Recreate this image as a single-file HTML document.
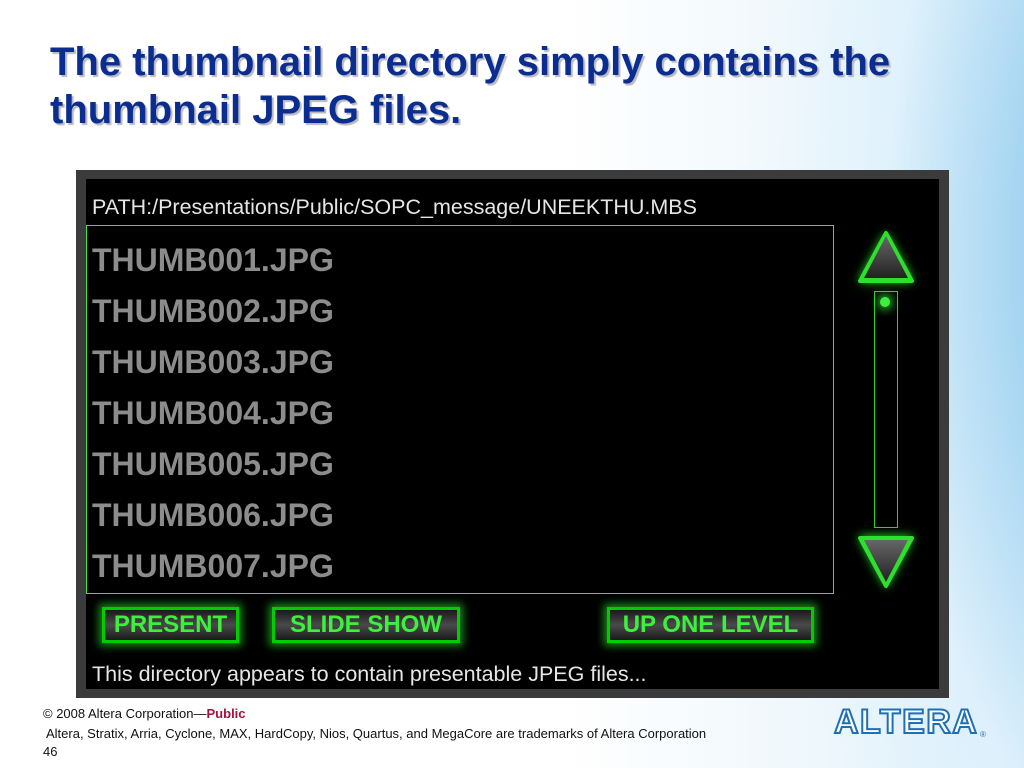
<!DOCTYPE html>
<html><head><meta charset="utf-8"><style>
body{margin:0;width:1024px;height:768px;overflow:hidden;position:relative;font-family:"Liberation Sans",sans-serif;
background:
radial-gradient(ellipse 420px 900px at 1180px 250px,#5fb4e6 0%,#9fd2f0 35%,rgba(220,240,252,0.6) 70%,rgba(255,255,255,0) 100%),
linear-gradient(90deg,#ffffff 0%,#ffffff 55%,#eef7fc 80%,#dceffa 100%);}
.t{position:absolute;left:50px;top:38px;font-size:40px;font-weight:bold;color:#0b2d8f;line-height:48px;text-shadow:2px 2px 1px #b8b8c0;white-space:nowrap;}
.frame{position:absolute;left:76px;top:170px;width:853px;height:510px;border:10px solid #3b3b3b;border-top-width:9px;border-bottom-width:9px;background:#000;}
.path{position:absolute;left:6px;top:16px;color:#e6e6e6;font-size:21.5px;white-space:nowrap;}
.list{position:absolute;left:0px;top:46px;width:746px;height:367px;border:1px solid #3ee03e;}
.f{position:absolute;left:5px;color:#8c8c8c;font-weight:bold;font-size:32px;}
.btn{position:absolute;top:607px;height:36px;background:linear-gradient(#1a1a1a,#4a4a4a 50%,#1a1a1a);border:3px solid #0c0;box-shadow:0 0 8px 3px #1c8a1c;color:#3ef03e;font-weight:bold;font-size:24px;line-height:30px;text-align:center;box-sizing:border-box;white-space:nowrap;}
.msg{position:absolute;left:6px;top:483px;color:#e6e6e6;font-size:21.5px;white-space:nowrap;}
.foot{position:absolute;left:43px;font-size:13px;color:#111;white-space:nowrap;}
</style></head><body>
<div class="t">The thumbnail directory simply contains the<br>thumbnail JPEG files.</div>
<div class="frame">
<div class="path">PATH:/Presentations/Public/SOPC_message/UNEEKTHU.MBS</div>
<div class="list">
<div class="f" style="top:16px">THUMB001.JPG</div>
<div class="f" style="top:67px">THUMB002.JPG</div>
<div class="f" style="top:118px">THUMB003.JPG</div>
<div class="f" style="top:169px">THUMB004.JPG</div>
<div class="f" style="top:220px">THUMB005.JPG</div>
<div class="f" style="top:271px">THUMB006.JPG</div>
<div class="f" style="top:322px">THUMB007.JPG</div>
</div>
<div class="msg">This directory appears to contain presentable JPEG files...</div>
</div>
<svg style="position:absolute;left:840px;top:220px" width="100" height="380">
<defs><filter id="g" x="-50%" y="-50%" width="200%" height="200%"><feGaussianBlur stdDeviation="5"/></filter>
<linearGradient id="d" x1="0" y1="0" x2="0" y2="1"><stop offset="0" stop-color="#666"/><stop offset="1" stop-color="#222"/></linearGradient></defs>
<polygon points="46,12 74,62 18,62" fill="#2ee02e" filter="url(#g)"/>
<polygon points="46,13 72,61 20,61" fill="#2ee02e" stroke="#2ee02e" stroke-width="4" stroke-linejoin="round"/>
<polygon points="46,16 68,58 24,58" fill="url(#d)"/>
<rect x="34.5" y="71.5" width="23" height="236" fill="none" stroke="#2fcf2f"/>
<circle cx="45" cy="82" r="7" fill="#2ee02e" filter="url(#g)"/>
<circle cx="45" cy="82" r="5" fill="#3ef03e"/>
<polygon points="18,316 74,316 46,368" fill="#2ee02e" filter="url(#g)"/>
<polygon points="20,318 72,318 46,366" fill="#2ee02e" stroke="#2ee02e" stroke-width="4" stroke-linejoin="round"/>
<polygon points="24,320 68,320 46,362" fill="url(#d)"/>
</svg>
<div class="btn" style="left:102px;width:137px">PRESENT</div>
<div class="btn" style="left:272px;width:188px">SLIDE SHOW</div>
<div class="btn" style="left:607px;width:207px">UP ONE LEVEL</div>
<div class="foot" style="top:706px">© 2008 Altera Corporation—<b style="color:#a0123c">Public</b></div>
<div class="foot" style="top:726px;left:46px">Altera, Stratix, Arria, Cyclone, MAX, HardCopy, Nios, Quartus, and MegaCore are trademarks of Altera Corporation</div>
<div class="foot" style="top:744px">46</div>
<div style="position:absolute;left:834px;top:703px;font-size:34px;font-weight:bold;color:#fff;-webkit-text-stroke:2px #1f6fb5;letter-spacing:1.5px;font-family:'Liberation Sans',sans-serif">ALTERA</div>
<div style="position:absolute;left:980px;top:730px;font-size:8px;color:#1f6fb5">®</div>
</body></html>
